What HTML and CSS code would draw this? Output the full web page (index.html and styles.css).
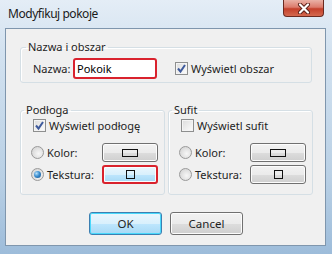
FILE: index.html
```html
<!DOCTYPE html>
<html>
  <head>
    <link rel="stylesheet" href="styles.css">
  </head>
  <body>
    <div class="window">
      <div class="titlebar">
        <span class="title">Modyfikuj pokoje</span>
        <button class="close" aria-label="Zamknij">
          <svg width="16" height="11" viewBox="0 0 16 11">
            <path d="M4 1.5 L12 9.5 M12 1.5 L4 9.5" stroke="#5a2018" stroke-width="4" stroke-linecap="round"/>
            <path d="M4 1.5 L12 9.5 M12 1.5 L4 9.5" stroke="#ffffff" stroke-width="2.2" stroke-linecap="round"/>
          </svg>
        </button>
      </div>

      <div class="client">
        <fieldset class="group group-name">
          <legend>Nazwa i obszar</legend>
          <div class="name-row">
            <label for="room-name">Nazwa:</label>
            <input type="text" id="room-name" class="marked" value="Pokoik">
            <span class="check checked">
              <svg width="11" height="11" viewBox="0 0 11 11"><path d="M2 5.5 L4.5 8.5 L9 2" fill="none" stroke="#3e5a9c" stroke-width="2"/></svg>
            </span>
            <span class="option-text">Wyświetl obszar</span>
          </div>
        </fieldset>

        <div class="groups">
          <fieldset class="group">
            <legend>Podłoga</legend>
            <div class="option">
              <span class="check checked">
                <svg width="11" height="11" viewBox="0 0 11 11"><path d="M2 5.5 L4.5 8.5 L9 2" fill="none" stroke="#3e5a9c" stroke-width="2"/></svg>
              </span>
              <span class="option-text">Wyświetl podłogę</span>
            </div>
            <div class="option-row first">
              <span class="radio"></span>
              <span class="option-text">Kolor:</span>
              <button class="pick"><span class="icon-rect"></span></button>
            </div>
            <div class="option-row">
              <span class="radio selected"></span>
              <span class="option-text">Tekstura:</span>
              <button class="pick active marked"><span class="icon-square"></span></button>
            </div>
          </fieldset>

          <fieldset class="group">
            <legend>Sufit</legend>
            <div class="option">
              <span class="check"></span>
              <span class="option-text">Wyświetl sufit</span>
            </div>
            <div class="option-row first">
              <span class="radio"></span>
              <span class="option-text">Kolor:</span>
              <button class="pick"><span class="icon-rect"></span></button>
            </div>
            <div class="option-row">
              <span class="radio"></span>
              <span class="option-text">Tekstura:</span>
              <button class="pick"><span class="icon-square"></span></button>
            </div>
          </fieldset>
        </div>

        <div class="actions">
          <button class="btn default">OK</button>
          <button class="btn">Cancel</button>
        </div>
      </div>
    </div>
  </body>
</html>
```

FILE: styles.css
```css
body {
  margin: 0;
  font-family: "Noto Sans", "Open Sans", sans-serif;
  font-size: 11px;
  color: #1e1e1e;
}
.window {
  width: 332px;
  height: 254px;
  box-sizing: border-box;
  padding: 0 6px 0 5px;
  background: linear-gradient(to bottom, #e4edf6 0%, #d3e2f0 20%, #b9d0e5 70%, #9dbcda 100%);
}
.titlebar {
  height: 28px;
  display: flex;
  align-items: flex-start;
  justify-content: space-between;
}
.title {
  margin: 5px 0 0 3px;
  font-size: 12px;
  letter-spacing: -0.45px;
  color: #1a1a1a;
}
.close {
  width: 41px;
  height: 17px;
  margin-right: 2px;
  padding: 0;
  display: flex;
  align-items: center;
  justify-content: center;
  border: 1px solid #6b2a20;
  border-top: none;
  border-radius: 0 0 4px 4px;
  background: linear-gradient(to bottom, #eab1a6 0%, #dc7b6c 45%, #c4402b 55%, #d4694f 100%);
}
.client {
  height: 218px;
  box-sizing: border-box;
  border: 1px solid #7f96ad;
  background: #f0f0f0;
  padding: 11px 13px 0 14px;
}
.group {
  margin: 0;
  padding: 0 6px 0 10px;
  border: 1px solid #d5dfe5;
  border-radius: 3px;
  box-shadow: inset 1px 1px 0 #fff;
}
.group legend {
  margin-left: -7px;
  padding: 0 2px;
  line-height: 14px;
}
.group-name {
  padding: 4px 12px 3px 12px;
}
.name-row {
  display: flex;
  align-items: center;
  height: 21px;
}
.name-row label {
  width: 40px;
}
.name-row input {
  width: 84px;
  height: 21px;
  box-sizing: border-box;
  padding: 0 2px;
  font-family: inherit;
  font-size: 11px;
  background: #fff;
  margin-right: 18px;
}
.marked {
  border: 2px solid #d9222d;
  border-radius: 3px;
  outline: none;
}
.groups {
  display: grid;
  grid-template-columns: 145px 145px;
  gap: 3px;
  margin-top: 20px;
}
.groups .group {
  padding-top: 1px;
  padding-bottom: 10px;
}
.option {
  display: flex;
  align-items: center;
  height: 14px;
  margin-left: 2px;
}
.option-row {
  display: flex;
  align-items: center;
  height: 19px;
  margin-top: 3px;
}
.option-row.first {
  margin-top: 11px;
}
.option-text {
  margin-left: 3px;
  flex: 1;
}
.check {
  width: 13px;
  height: 13px;
  box-sizing: border-box;
  border: 1px solid #8e8f8f;
  background: linear-gradient(135deg, #dcdcdc, #fdfdfd);
  box-shadow: inset 0 0 0 1px #f4f4f4;
  display: flex;
  align-items: center;
  justify-content: center;
  flex: none;
}
.radio {
  width: 13px;
  height: 13px;
  box-sizing: border-box;
  border: 1px solid #9a9a9a;
  border-radius: 50%;
  background: radial-gradient(circle at 60% 60%, #f7f7f7 0%, #dadada 70%, #cfcfcf 100%);
  display: flex;
  align-items: center;
  justify-content: center;
  flex: none;
}
.radio.selected::after {
  content: "";
  width: 7px;
  height: 7px;
  border-radius: 50%;
  background: radial-gradient(circle at 35% 35%, #b7e1fb 0%, #3d8fd0 45%, #154d86 100%);
}
.pick {
  width: 56px;
  height: 19px;
  padding: 0;
  display: flex;
  align-items: center;
  justify-content: center;
  border: 1px solid #707070;
  border-radius: 3px;
  background: linear-gradient(to bottom, #f2f2f2 0%, #ebebeb 50%, #dddddd 51%, #cfcfcf 100%);
  box-shadow: inset 0 0 0 1px #fcfcfc;
}
.pick.active {
  background: linear-gradient(to bottom, #eaf6fd 0%, #d9f0fc 50%, #bee6fd 51%, #a7d9f5 100%);
}
.pick.marked {
  border: 2px solid #d9222d;
}
.icon-rect {
  width: 14px;
  height: 6px;
  border: 1px solid #111;
}
.icon-square {
  width: 7px;
  height: 7px;
  border: 1px solid #111;
}
.actions {
  display: flex;
  justify-content: center;
  gap: 8px;
  margin-top: 17px;
}
.btn {
  width: 73px;
  height: 23px;
  padding: 0;
  font-family: inherit;
  font-size: 11.5px;
  color: #1e1e1e;
  border: 1px solid #707070;
  border-radius: 3px;
  background: linear-gradient(to bottom, #f2f2f2 0%, #ebebeb 50%, #dddddd 51%, #cfcfcf 100%);
  box-shadow: inset 0 0 0 1px #fcfcfc;
}
.btn.default {
  border-color: #3c7fb1;
  background: linear-gradient(to bottom, #eaf6fd 0%, #d9f0fc 50%, #bee6fd 51%, #a7d9f5 100%);
  box-shadow: inset 0 0 0 1px #48d8fb;
}
```
